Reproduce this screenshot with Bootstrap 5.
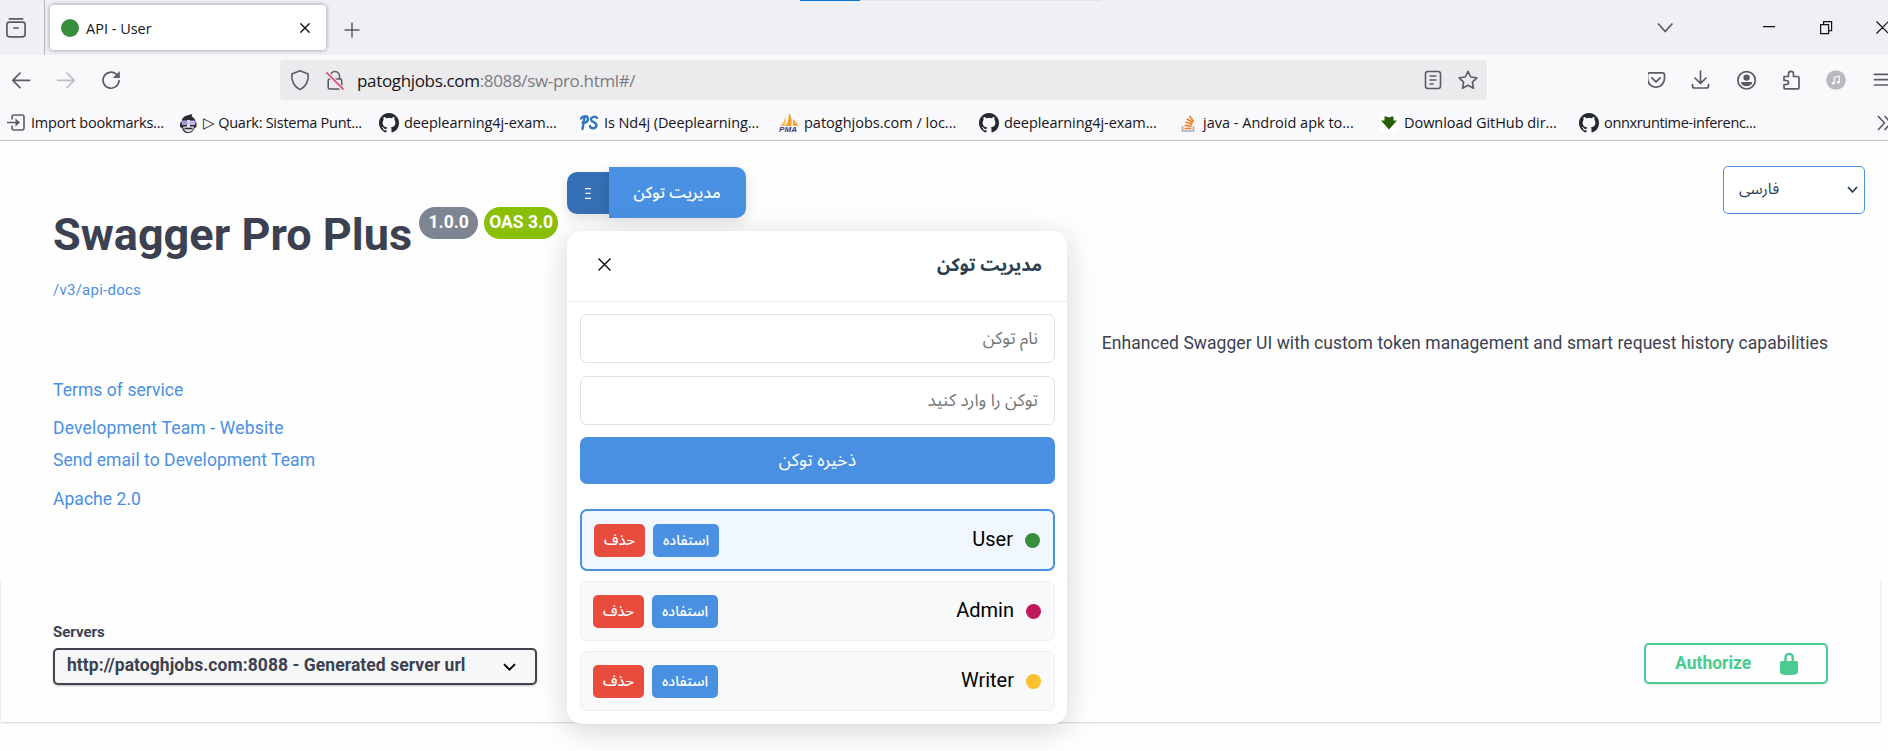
<!DOCTYPE html>
<html lang="en">
<head>
<meta charset="utf-8">
<title>API - User</title>
<link href="https://cdn.jsdelivr.net/npm/bootstrap@5.3.0/dist/css/bootstrap.min.css" rel="stylesheet">
<style>
  body{width:1888px;height:751px;overflow:hidden;background:#fefefe;font-family:Roboto,sans-serif;color:#3b4151;font-size:17.5px}
  svg{display:block;flex:none}
  a{color:#4990e2;text-decoration:none}
  /* browser chrome */
  .chrome-text{font-family:"Open Sans",sans-serif;color:#15141a;white-space:nowrap}
  .tabstrip{height:55px;background:#f0eff4}
  .loadbar{position:absolute;left:800px;top:0;width:301px;height:1px;background:#e3e3e3}
  .loadbar div{width:60px;height:1px;background:#0078d7}
  .view-cell{width:45px;border-right:1px solid #b5b5ba;padding-left:6px}
  .tab-active{width:276px;height:45px;margin:5px 0 0 5px;padding:0 16px 0 11px;border-radius:4px;background:#fff;box-shadow:0 0 5px rgba(0,0,0,.38);font-size:14.5px}
  .tab-active span{padding-top:2px}
  .favdot{width:18px;height:18px;background:#388e3c;margin-right:7px}
  .newtab{margin-left:14px}
  .navrow{height:45px;background:#f9f9fb;padding-top:5px}
  .urlbar{width:1207px;height:40px;border-radius:4px;background:#ebebed;font-size:17px;letter-spacing:-.34px;padding:0 9px 0 10px}
  .urlbar span{padding-top:1px}
  .urlbar .dim{color:#7b7a80}
  .bookmarks{height:41px;background:#f9f9fb;border-bottom:1px solid #c6c6c9;font-size:14.5px;padding:6px 0 0 7px}
  .bookmarks .bm{width:200px;gap:5px}
  .bookmarks .bm-first{width:172px;gap:6px}
  .t1{letter-spacing:-.23px}.t2{letter-spacing:-.27px}.t3{letter-spacing:-.07px}.t4{letter-spacing:-.05px}.t5{letter-spacing:-.34px}
  /* page */
  .info{height:438px}
  .info-left{width:567px;padding:67px 0 0 53px}
  .api-title{font-size:45px;line-height:53px;font-weight:700;letter-spacing:.02px;white-space:nowrap;margin:0}
  .ver{height:32px;border-radius:16px;color:#fff;font-weight:700;font-size:17.5px;line-height:31px;text-align:center;margin-top:-1px}
  .ver-no{width:59px;background:#7d8492;margin-left:7px}
  .ver-oas{width:74px;background:#89bf04;margin-left:6px}
  .docs{font-size:15px;line-height:18px;margin-top:20px;letter-spacing:.25px}
  .lnk{line-height:21px;letter-spacing:.05px}
  .lnk-terms{margin-top:81px}.lnk-site{margin-top:17px;letter-spacing:.17px}.lnk-mail{margin-top:11px}.lnk-lic{margin-top:18px}
  .fa{font-family:"Noto Sans Arabic","Noto Sans",sans-serif}
  .token{width:500px;padding-top:26px}
  .grip{width:42px;height:42px;margin-top:5px;border-radius:10px 0 0 10px;background:#3570b5;box-shadow:0 4px 12px rgba(0,0,0,.12)}
  .token-btn{width:137px;height:51px;border-radius:0 10px 10px 0;background:#4990e2;color:#fff;font-size:16px;font-weight:500;line-height:48px;padding:0 1px 0 0;border:0;box-shadow:0 4px 15px rgba(0,0,0,.13)}
  .panel{left:0;top:90px;width:500px;height:493px;background:#fff;border-radius:15px;box-shadow:0 6px 30px rgba(0,0,0,.17);z-index:5}
  .panel-head{height:71px;border-bottom:1px solid #ebebeb;padding:0 25px 0 31px}
  .panel-head h5{color:#2c3e50;font-size:18px;font-weight:700}
  .panel-body{padding:12px 12px 0 13px}
  .field{height:49px;border:1px solid #e0e0e0;border-radius:7px;margin-bottom:13px;padding:0 16px;font-size:17.2px;color:#757575;line-height:47px;background:#fff;width:475px;direction:rtl}
  .save{height:47px;margin-top:-1px;border-radius:7px;background:#4990e2;color:#fff;font-size:17.7px;line-height:43px;border:0;padding:0}
  .tok-list{margin-top:25px}
  .tok{height:60px;border:1px solid #eceef0;border-radius:7px;background:#f8f9fb;margin-bottom:10px;padding:0 13px 0 12px;color:#000;font-size:20px}
  .tok.sel{height:62px;border:2px solid #4990e2;background:#f0f7ff}
  .tok .dot{width:15px;height:15px;border-radius:50%;margin:1px 0 0 12px}
  .tok .name{margin-top:-3px;font-family:Roboto,sans-serif}
  .act{height:33px;border-radius:5px;color:#fff;border:0;padding:0;font-size:14.5px;font-weight:500;line-height:29px}
  .del{width:51px;background:#e84c3d}
  .use{width:66px;background:#4990e2;margin-left:8px}
  .info-right{width:821px}
  .lang{width:142px;height:48px;border:1px solid #4990e2;border-radius:5px;margin:25px 23px 0 0;padding:0 6px 0 15px;font-size:15.5px;color:#2c3e50;background:#fff}
  .lang span{margin-bottom:1px}
  .desc{margin:119px 60px 0 0;line-height:21px;letter-spacing:.05px;white-space:nowrap}
  .scheme{width:1879px;height:143px;margin-left:1px;background:#fefefe;box-shadow:0 1px 2px rgba(0,0,0,.18);padding:44px 52px 0 52px}
  .srv-label{font-size:15px;line-height:18px;font-weight:700}
  .srv{width:484px;height:37px;margin-top:7px;border:2px solid #41444e;border-radius:5px;background:#f7f7f7;box-shadow:0 1px 2px rgba(0,0,0,.25);font-weight:700;padding:0 19px 3px 12px;letter-spacing:.06px}
  .auth{width:184px;height:41px;margin-top:20px;border:2px solid #49cc90;border-radius:5px;color:#49cc90;font-weight:700;box-shadow:0 1px 2px rgba(0,0,0,.1);padding:0 28px 0 29px;background:transparent}
  .auth span{margin-bottom:1px}
</style>
</head>
<body>
<svg class="d-none" xmlns="http://www.w3.org/2000/svg">
  <symbol id="gh" viewBox="0 0 16 16"><path fill="#24292f" d="M8 0C3.58 0 0 3.58 0 8c0 3.54 2.29 6.53 5.47 7.59.4.07.55-.17.55-.38 0-.19-.01-.82-.01-1.49-2.01.37-2.53-.49-2.69-.94-.09-.23-.48-.94-.82-1.13-.28-.15-.68-.52-.01-.53.63-.01 1.08.58 1.23.82.72 1.21 1.87.87 2.33.66.07-.52.28-.87.51-1.07-1.78-.2-3.64-.89-3.64-3.95 0-.87.31-1.59.82-2.15-.08-.2-.36-1.02.08-2.12 0 0 .67-.21 2.2.82a7.6 7.6 0 0 1 4 0c1.53-1.04 2.2-.82 2.2-.82.44 1.1.16 1.92.08 2.12.51.56.82 1.27.82 2.15 0 3.07-1.87 3.75-3.65 3.95.29.25.54.73.54 1.48 0 1.07-.01 1.93-.01 2.2 0 .21.15.46.55.38A8.01 8.01 0 0 0 16 8c0-4.42-3.58-8-8-8"/></symbol>
</svg>

<header class="chrome-text position-relative">
  <div class="tabstrip d-flex">
    <div class="loadbar"><div></div></div>
    <div class="view-cell d-flex align-items-center">
      <svg width="20" height="20" viewBox="0 0 20 20" fill="none" stroke="#5b5b66" stroke-width="1.7" stroke-linecap="round"><path d="M3.500.900h13"/><rect x=".900" y="4.200" width="18.200" height="14.600" rx="2.600"/><path d="M7.800 10h4.400"/></svg>
    </div>
    <div class="tab-active d-flex align-items-center">
      <div class="favdot rounded-circle"></div><span>API - User</span>
      <svg class="ms-auto" width="10" height="10" viewBox="0 0 10 10" stroke="#15141a" stroke-width="1.4"><path d="M.4.4l9.2 9.2M9.600.400L.4 9.600"/></svg>
    </div>
    <svg class="newtab align-self-center mt-1" width="21" height="16" viewBox="-2.500 0 21 16" stroke="#5b5b66" stroke-width="1.500"><path d="M9.500 .5v15M2 8h15"/></svg>
    <div class="ms-auto d-flex align-items-center">
      <svg width="232" height="15" viewBox="1656 20 232 15" fill="none" stroke="#111" stroke-width="1.200"><path stroke="#5b5b66" stroke-width="1.700" d="M1658 23.500l7.200 8 7.200-8"/><path d="M1763 26.600h12M1820.600 24.600h8v9h-8zM1823.600 24.600v-3h8v9h-3M1876.500 21.500l12 12M1888.500 21.500l-12 12"/></svg>
    </div>
  </div>
  <div class="navrow d-flex">
    <svg width="280" height="40" viewBox="0 60 280 40" fill="none" stroke="#5b5b66" stroke-width="1.700" stroke-linecap="round" stroke-linejoin="round"><path d="M29.500 80.300H12.800M20 73l-7.200 7.300L20 87.600"/><path stroke="#bdbdc3" d="M57.500 80.300h16.700M67 73l7.200 7.300-7.200 7.300"/><path d="M119 80.500a8 8 0 1 1-2.700-6.300"/><path fill="#5b5b66" stroke="none" d="M119.800 71v7h-7z"/></svg>
    <div class="urlbar d-flex align-items-center">
      <svg width="67" height="30" viewBox="290 65 67 30" fill="none" stroke="#5b5b66" stroke-width="1.600" stroke-linejoin="round"><path d="M300 70.800l8.200 3.200c.4 6.500-1.200 12-8.200 15.600-7-3.600-8.600-9.100-8.200-15.600z"/><rect x="328.200" y="79" width="13.500" height="10" rx="1.500"/><path d="M330.500 79v-3a4.500 4.500 0 0 1 9 0v3"/><path stroke="#ebebed" stroke-width="4" d="M326.500 72.500l16.500 17"/><path stroke="#e8355f" d="M326.500 72.500l17 17"/></svg>
      <span>patoghjobs.com<span class="dim">:8088/sw-pro.html#/</span></span>
      <svg class="ms-auto" width="54" height="24" viewBox="1424 68 54 24" fill="none" stroke="#5b5b66" stroke-width="1.600" stroke-linejoin="round"><rect x="1425.500" y="71.500" width="15" height="17" rx="2.400"/><path d="M1429.500 76h7M1429.500 80h7M1429.500 84h4"/><path d="M1468 71.300l2.700 5.700 6.200.8-4.500 4.300 1.100 6.200-5.500-3-5.500 3 1.100-6.200-4.500-4.300 6.200-.8z"/></svg>
    </div>
    <svg class="ms-auto" width="240" height="40" viewBox="1648 60 240 40" fill="none" stroke="#5b5b66" stroke-width="1.700" stroke-linecap="round" stroke-linejoin="round">
      <path d="M1649.500 72.800h13c1.300 0 2 .7 2 2v3.500c0 5-3.800 9-8.500 9s-8.500-4-8.500-9v-3.500c0-1.300.7-2 2-2zM1651.800 77.800l4.200 4 4.200-4"/>
      <path d="M1700.500 71v12M1695 78l5.500 5.500L1706 78M1692.500 84.500v1.500q0 2 2 2h12q2 0 2-2v-1.500"/>
      <circle cx="1746.600" cy="80.300" r="8.700"/><circle cx="1746.600" cy="77.600" r="3.200" fill="#5b5b66" stroke="none"/><path fill="#5b5b66" stroke="none" d="M1741 82h11.200c0 2.500-2.600 4.200-5.600 4.200s-5.600-1.700-5.600-4.200z"/>
      <path d="M1784 76.500h4.500v-2.700a2.500 2.500 0 0 1 5 0v2.700h4.300q1.200 0 1.200 1.200v10q0 1.200-1.200 1.200h-12.600q-1.200 0-1.200-1.200v-3.200h2.500a2 2 0 0 0 0-4h-2.500z"/>
      <circle cx="1836" cy="80" r="9.800" fill="#b9b9be" stroke="none"/><path d="M1834.300 83v-6l5-1v6" stroke="#fff" stroke-width="1.200"/><circle cx="1833.300" cy="83.300" r="1.400" fill="#fff" stroke="none"/><circle cx="1838.300" cy="82.300" r="1.400" fill="#fff" stroke="none"/>
      <path d="M1874.500 74.300h16M1874.500 79.700h16M1874.500 85h16"/>
    </svg>
  </div>
  <div class="bookmarks d-flex align-items-center">
    <div class="bm-first d-flex align-items-center"><svg width="18" height="18" viewBox="0 0 18 18" fill="none" stroke="#5b5b66" stroke-width="1.600" stroke-linejoin="round"><path d="M5 5.500V3q0-2 2-2h8q2 0 2 2v11q0 2-2 2H7q-2 0-2-2v-2.500M0 8.500h11"/><path fill="#5b5b66" stroke="none" d="M8.500 4.500l4.500 4-4.500 4z"/></svg><span class="t1">Import bookmarks...</span></div>
    <div class="bm d-flex align-items-center"><svg width="19" height="19" viewBox="0 0 19 19"><path fill="#2c2a33" d="M3 7C2.500 3 7 1.500 13.500 0c-1 1.500-1 2.500 0 3 2 1 3 3 3 5l1 1v4l-2 1c-1 3-3 5-6.500 5S4 17 3 14l-2-1V9z"/><path fill="#e3e1ea" d="M4 12.500h11c-.5 3.500-2.500 5.500-5.500 5.500S4.500 16 4 12.500zM8 6h3v7H8z"/><rect x="2.500" y="6.500" width="6.300" height="4.500" rx="1.500" fill="#a898d6"/><rect x="10" y="6.500" width="6.300" height="4.500" rx="1.500" fill="#c3b6e6"/><path stroke="#2c2a33" stroke-width="1.500" d="M5.500 14.500h8"/></svg><span class="t2">▷ Quark: Sistema Punt...</span></div>
    <div class="bm d-flex align-items-center"><svg width="20" height="20"><use href="#gh"/></svg><span class="t3">deeplearning4j-exam...</span></div>
    <div class="bm d-flex align-items-center"><svg width="20" height="20" viewBox="0 0 20 20"><rect width="20" height="20" fill="#fff"/><g fill="none" stroke="#3678b8" stroke-width="2.400" stroke-linecap="round"><path d="M2 5.500C4 2.500 9 2.500 9 6s-4 4.500-5.500 3.500M5.500 4.500L3.500 16"/><path d="M18 5c-1-2-6-1.500-6 1.500S18 9 17.500 12.500 11.500 16 11 13"/></g></svg><span class="t3">Is Nd4j (Deeplearning...</span></div>
    <div class="bm d-flex align-items-center"><svg width="20" height="20" viewBox="0 0 20 20"><path fill="#f89c1c" d="M10 0c3 4 3 9 2 13H6c3-3 4-8 4-13z"/><path fill="#fbb65a" d="M6 3c0 4-2 8-5 10h4c2-2 2-6 1-10z"/><path fill="#f9a63a" d="M14 6c3 2 4 5 5 7h-5z"/><text x="0" y="19" font-family="Liberation Sans" font-weight="700" font-style="italic" font-size="8" textLength="18" fill="#3b3b78">PMA</text></svg><span>patoghjobs.com / loc...</span></div>
    <div class="bm d-flex align-items-center"><svg width="20" height="20"><use href="#gh"/></svg><span class="t3">deeplearning4j-exam...</span></div>
    <div class="bm d-flex align-items-center"><svg width="19" height="20" viewBox="0 0 19 20" fill="none" stroke-width="1.700"><path stroke="#a9adb1" d="M3.500 13v5h11v-5"/><path stroke="#f48024" d="M5.500 15.500h7M5.600 12.300l7 1M6.400 9l6.700 2.500M8 5.800l5.700 4.200M10.600 3l4 5.800"/></svg><span>java - Android apk to...</span></div>
    <div class="bm d-flex align-items-center"><svg width="20" height="20" viewBox="0 0 20 20"><rect width="20" height="20" rx="3" fill="#fff"/><path fill="#285f04" d="M5.500 3.500h2l2.500 1 2.500-1h2v4H18l-8 9-8-9h3.500z"/></svg><span class="t4">Download GitHub dir...</span></div>
    <div class="bm d-flex align-items-center"><svg width="20" height="20"><use href="#gh"/></svg><span class="t5">onnxruntime-inferenc...</span></div>
    <svg class="ms-auto" width="11" height="16" viewBox="0 0 11 16" fill="none" stroke="#5b5b66" stroke-width="1.600"><path d="M1 1l6.500 7L1 15M7.500 1L14 8l-6.500 7"/></svg>
  </div>
</header>

<main>
  <section class="info d-flex">
    <div class="info-left">
      <div class="d-flex align-items-start">
        <h2 class="api-title">Swagger Pro Plus</h2>
        <span class="ver ver-no">1.0.0</span><span class="ver ver-oas">OAS 3.0</span>
      </div>
      <div class="docs"><a href="#">/v3/api-docs</a></div>
      <div class="lnk lnk-terms"><a href="#">Terms of service</a></div>
      <div class="lnk lnk-site"><a href="#">Development Team - Website</a></div>
      <div class="lnk lnk-mail"><a href="#">Send email to Development Team</a></div>
      <div class="lnk lnk-lic"><a href="#">Apache 2.0</a></div>
    </div>

    <div class="token position-relative fa">
      <div class="d-flex">
        <div class="grip d-flex align-items-center justify-content-center"><svg width="6" height="11" viewBox="0 0 6 11" stroke="#fff" stroke-width="1.200"><path d="M0 .6h6M.5 5.300h5M0 10.300h6"/></svg></div>
        <button class="btn token-btn" dir="rtl">مدیریت توکن</button>
      </div>
      <div class="panel position-absolute">
        <div class="panel-head d-flex align-items-center justify-content-between">
          <svg class="mb-1" width="13" height="13" viewBox="0 0 13 13" stroke="#000" stroke-width="1.300"><path d="M.5.500l12 12M12.500.500l-12 12"/></svg>
          <h5 class="mb-0" dir="rtl">مدیریت توکن</h5>
        </div>
        <div class="panel-body">
          <div class="field">نام توکن</div>
          <div class="field">توکن را وارد کنید</div>
          <button class="btn save d-block w-100" dir="rtl">ذخیره توکن</button>
          <div class="tok-list">
            <div class="tok sel d-flex align-items-center"><button class="btn act del">حذف</button><button class="btn act use">استفاده</button><span class="name ms-auto">User</span><span class="dot" style="background:#388e3c"></span></div>
            <div class="tok d-flex align-items-center"><button class="btn act del">حذف</button><button class="btn act use">استفاده</button><span class="name ms-auto">Admin</span><span class="dot" style="background:#c2185b"></span></div>
            <div class="tok d-flex align-items-center"><button class="btn act del">حذف</button><button class="btn act use">استفاده</button><span class="name ms-auto">Writer</span><span class="dot" style="background:#fbc02d"></span></div>
          </div>
        </div>
      </div>
    </div>

    <div class="info-right d-flex flex-column align-items-end">
      <div class="lang fa d-flex align-items-center justify-content-between"><span>فارسی</span><svg width="11" height="8" viewBox="0 0 11 8" fill="none" stroke="#2c3e50" stroke-width="1.800"><path d="M1 1l4.500 5L10 1"/></svg></div>
      <div class="desc">Enhanced Swagger UI with custom token management and smart request history capabilities</div>
    </div>
  </section>

  <section class="scheme d-flex justify-content-between">
    <div>
      <div class="srv-label">Servers</div>
      <div class="srv d-flex align-items-center justify-content-between"><span>http://patoghjobs.com:8088 - Generated server url</span><svg class="mt-1" width="13" height="9" viewBox="0 0 13 9" fill="none" stroke="#000" stroke-width="1.900"><path d="M1 1.200l5.500 5.500L12 1.200"/></svg></div>
    </div>
    <button class="auth d-flex align-items-center justify-content-between"><span>Authorize</span><svg width="18" height="23" viewBox="0 0 18 23"><path d="M5.500 10V5.500a3.600 3.600 0 0 1 7.200 0V10" fill="none" stroke="#49cc90" stroke-width="2.400"/><path fill="#49cc90" d="M1.500 9h15q1.500 0 1.500 1.500V20q0 2-2.500 2.400-6.500 1-13 0Q0 22 0 20v-9.500Q0 9 1.500 9z"/></svg></button>
  </section>
</main>
<script src="https://cdn.jsdelivr.net/npm/bootstrap@5.3.0/dist/js/bootstrap.bundle.min.js"></script>
</body>
</html>
